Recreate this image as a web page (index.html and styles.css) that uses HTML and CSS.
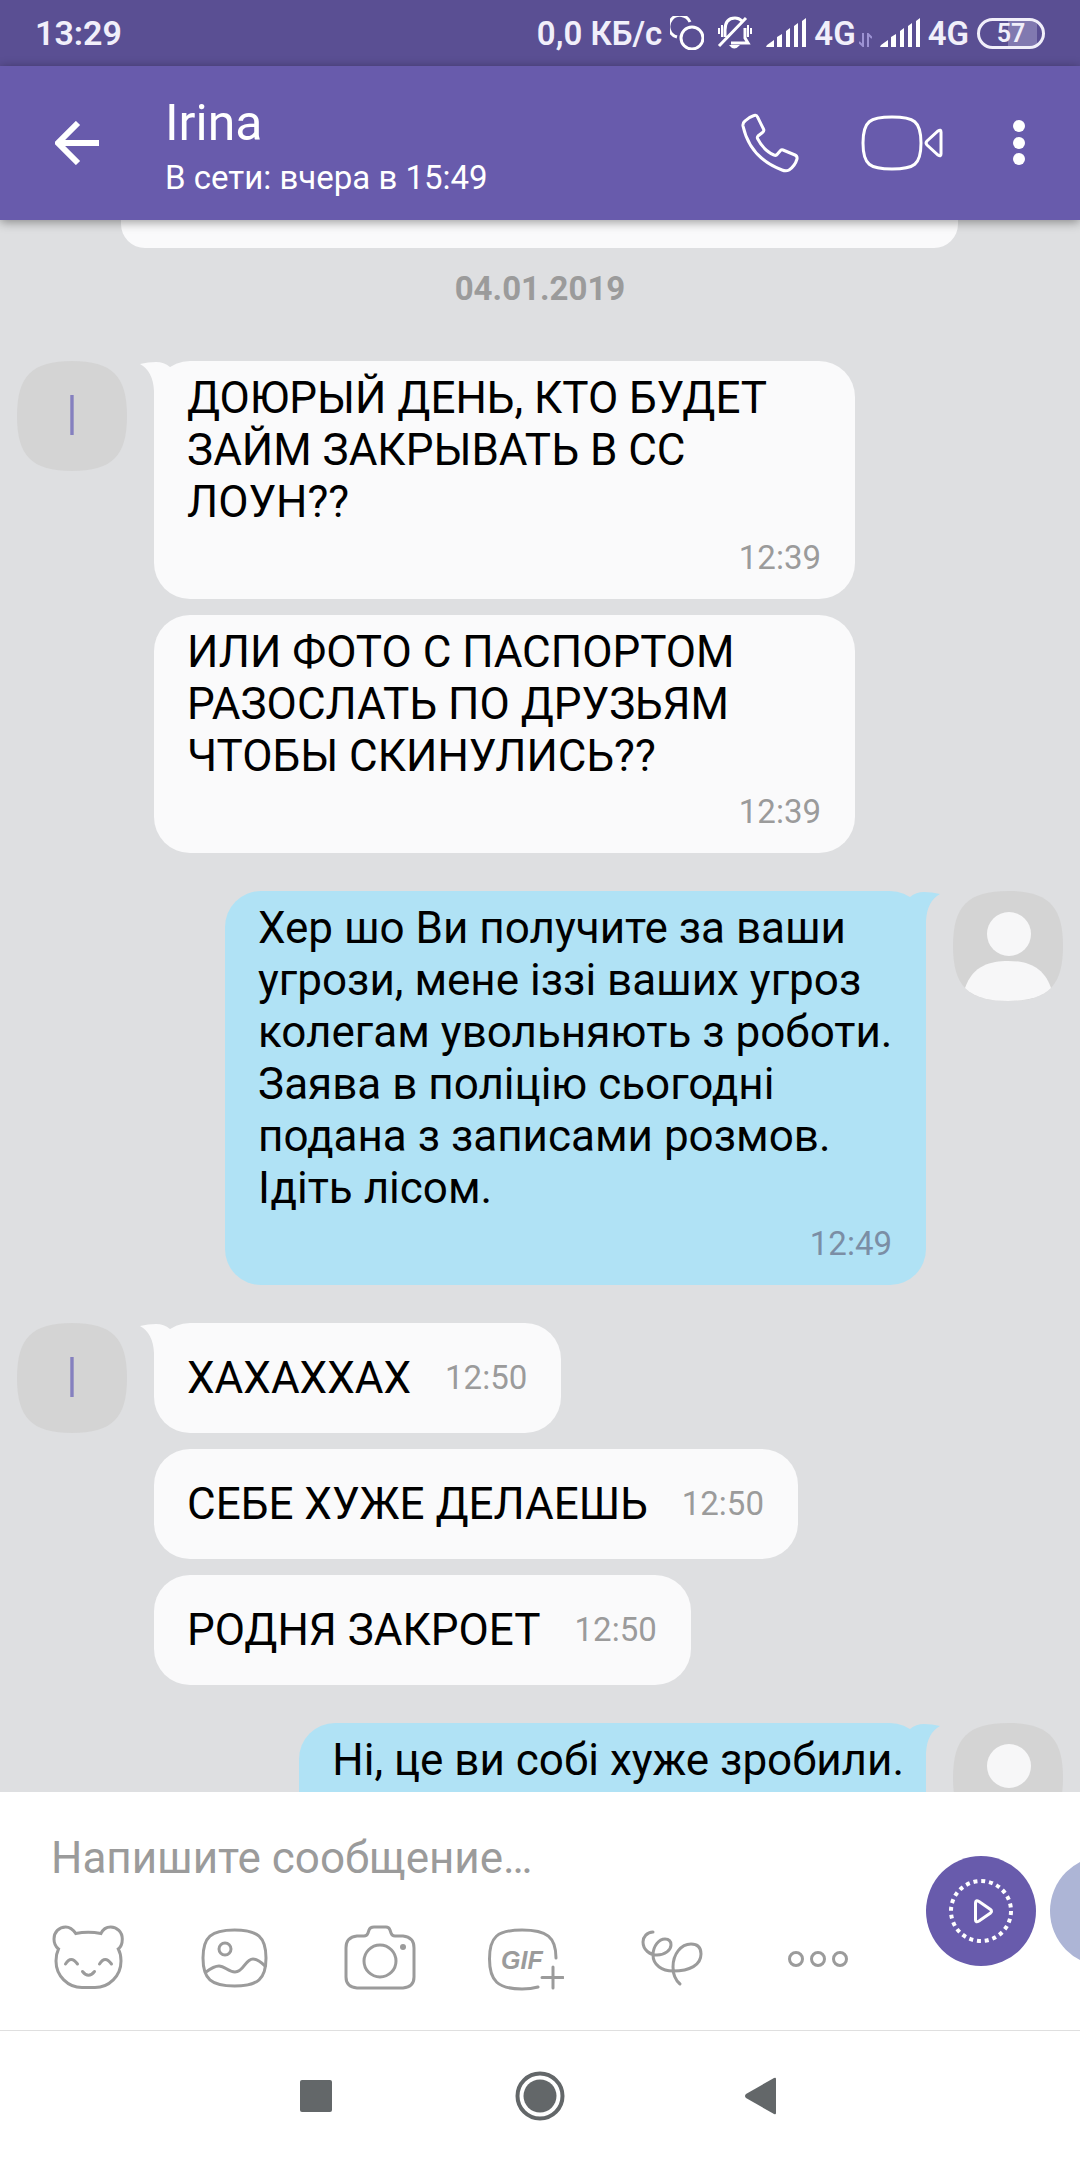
FILE: index.html
```
<!DOCTYPE html>
<html lang="ru">
    <head>
        <meta charset="utf-8">
        <title>Irina</title>
        <meta name="viewport" content="width=device-width, initial-scale=1">
        <link rel="stylesheet" href="styles.css">
    </head>

    <body>
        <svg class="sprite" aria-hidden="true">
            <symbol id="signal" viewBox="0 0 40 32">
                <path d="M0 30L1 28L8 23V30ZM11 30V20L16 17V30ZM20 30V14L24 11V30ZM28 30V9L32 6V30ZM36 30V4L40 1V30Z"/>
            </symbol>
            <symbol id="tail" viewBox="0 0 48 40">
                <path d="M0 3Q8 1 16 1Q24 1 30 6L40 40H14V30Q13 10 0 3Z"/>
            </symbol>
            <symbol id="squircle" viewBox="0 0 110 110">
                <path d="M55 0C95 0 110 15 110 55S95 110 55 110 0 95 0 55 15 0 55 0Z"/>
            </symbol>
            <symbol id="person" viewBox="0 0 110 110">
                <circle cx="56" cy="43" r="22"/>
                <path d="M12 97C20 74 38 70 55 70S90 74 98 97C88 107 72 110 55 110S22 107 12 97Z"/>
            </symbol>
        </svg>

        <div class="status-bar">
            <span class="clock">13:29</span>
            <div class="status-icons">
                <span>0,0 КБ/с</span>
                <svg class="line" width="34" height="34" viewBox="0 0 34 34">
                    <circle cx="22" cy="22" r="11"/>
                    <path d="M7 21A11 11 0 1 1 20 6"/>
                </svg>
                <svg class="line bell" width="36" height="34" viewBox="0 0 36 34">
                    <path d="M8 21V14Q8 2 18 2Q22 2 25 5M28 12V22L31 27H14M2 30L29 2"/>
                    <path class="thin" d="M2 12V18M5 9V21M31 9V21M34 12V18"/>
                    <path class="solid" d="M12 29H23Q17 36 12 29Z"/>
                </svg>
                <svg class="signal" width="40" height="32"><use href="#signal"/></svg>
                <span>4G</span>
                <svg class="arrows" width="13" height="14" viewBox="0 0 13 14">
                    <path d="M4 0V13L0 9M9 14V1L13 5"/>
                </svg>
                <svg class="signal" width="40" height="32"><use href="#signal"/></svg>
                <span>4G</span>
                <span class="battery">57</span>
            </div>
        </div>

        <header class="header">
            <button class="back" aria-label="Назад">
                <svg width="44" height="44" viewBox="0 0 44 44">
                    <path d="M23 2L3 22L23 42M3 22H44"/>
                </svg>
            </button>
            <div class="contact">
                <h1>Irina</h1>
                <p>В сети: вчера в 15:49</p>
            </div>
            <div class="header-actions">
                <button aria-label="Позвонить">
                    <svg class="line" width="60" height="62" viewBox="0 0 60 62">
                        <path d="M14 3.500Q16.500 2.500 17.500 5L23.500 17Q24.500 19 22.500 20.500L18 24Q17 25 17.500 26.500Q24 39 34 43Q36 44 37.500 42L40.500 38.500Q41.500 37.500 43 38L55 43Q57.500 44 57 47Q55 54 49 58Q46 59.500 42 58Q10 46 3 14Q2.500 11 5 9Q9 5 14 3.500Z"/>
                    </svg>
                </button>
                <button aria-label="Видеозвонок">
                    <svg class="line" width="82" height="58" viewBox="0 0 82 58">
                        <path d="M31 3C53 3 60 7 60 29S53 55 31 55 2 51 2 29 9 3 31 3Z"/>
                        <path d="M66 27L77 17Q80 15 80 18V40Q80 43 77 41L66 31Q64 29 66 27Z"/>
                    </svg>
                </button>
                <button aria-label="Меню">
                    <svg width="30" height="46" viewBox="0 0 30 46">
                        <circle cx="15" cy="6" r="6"/>
                        <circle cx="15" cy="23" r="6"/>
                        <circle cx="15" cy="39" r="6"/>
                    </svg>
                </button>
            </div>
        </header>

        <main class="chat">
            <div class="previous"></div>
            <div class="date">04.01.2019</div>

            <section class="group">
                <div class="avatar">
                    <svg class="avatar-shape"><use href="#squircle"/></svg>
                    <span>I</span>
                </div>
                <div class="messages">
                    <div class="bubble">
                        <svg class="tail"><use href="#tail"/></svg>
                        <p>ДОЮРЫЙ ДЕНЬ, КТО БУДЕТ ЗАЙМ ЗАКРЫВАТЬ В СС ЛОУН??</p>
                        <time>12:39</time>
                    </div>
                    <div class="bubble">
                        <p>ИЛИ ФОТО С ПАСПОРТОМ РАЗОСЛАТЬ ПО ДРУЗЬЯМ ЧТОБЫ СКИНУЛИСЬ??</p>
                        <time>12:39</time>
                    </div>
                </div>
            </section>

            <section class="group own">
                <div class="avatar">
                    <svg class="avatar-shape"><use href="#squircle"/></svg>
                    <svg class="person"><use href="#person"/></svg>
                </div>
                <div class="messages">
                    <div class="bubble">
                        <svg class="tail"><use href="#tail"/></svg>
                        <p>Хер шо Ви получите за ваши угрози, мене іззі ваших угроз колегам увольняють з роботи. Заява в поліцію сьогодні подана з записами розмов. Ідіть лісом.</p>
                        <time>12:49</time>
                    </div>
                </div>
            </section>

            <section class="group">
                <div class="avatar">
                    <svg class="avatar-shape"><use href="#squircle"/></svg>
                    <span>I</span>
                </div>
                <div class="messages">
                    <div class="bubble short">
                        <svg class="tail"><use href="#tail"/></svg>
                        <p>ХАХАХХАХ</p>
                        <time>12:50</time>
                    </div>
                    <div class="bubble short">
                        <p>СЕБЕ ХУЖЕ ДЕЛАЕШЬ</p>
                        <time>12:50</time>
                    </div>
                    <div class="bubble short">
                        <p>РОДНЯ ЗАКРОЕТ</p>
                        <time>12:50</time>
                    </div>
                </div>
            </section>

            <section class="group own">
                <div class="avatar">
                    <svg class="avatar-shape"><use href="#squircle"/></svg>
                    <svg class="person"><use href="#person"/></svg>
                </div>
                <div class="messages">
                    <div class="bubble tight">
                        <svg class="tail"><use href="#tail"/></svg>
                        <p>Ні, це ви собі хуже зробили.</p>
                    </div>
                </div>
            </section>
        </main>

        <footer class="composer">
            <div class="composer-main">
                <input type="text" aria-label="Сообщение" placeholder="Напишите сообщение…">
                <div class="toolbar">
                    <button aria-label="Стикеры">
                        <svg viewBox="0 0 76 76">
                            <path d="M25.700 13.500C22 8 18 7 15.700 7 9 7 4 12 4 19 4 23 6 27 8.500 29 7 32 6 36 6 41 6 56 18 67.500 32 67.500H45C59 67.500 71 56 71 41 71 36 70 32 68.300 29 71 27 72.300 23 72.300 19 72.300 12 67 7 60.700 7 57 7 53 9 51 13.500Q38 11 25.700 13.500Z"/>
                            <path d="M15.500 44Q21 35 27.500 44M49.500 44Q55 35 61.500 44M32.500 51.500Q38.500 59 44.500 51.500"/>
                        </svg>
                    </button>
                    <button aria-label="Галерея">
                        <svg viewBox="0 0 76 76">
                            <path d="M38.500 10C62 10 70 17 70 38S62 66 38.500 66 7 59 7 38 15 10 38.500 10Z"/>
                            <circle cx="29" cy="29" r="6"/>
                            <path d="M10 52Q18 46 23 46C29 46 32 52 39 52C48 52 49 39 57 39Q62 39 69 46"/>
                        </svg>
                    </button>
                    <button aria-label="Камера">
                        <svg viewBox="0 0 76 76">
                            <path d="M15 16H22Q25 16 26 13L27 10Q28 7 32 7H44Q47 7 48 10L49 13Q50 16 53 16H61Q72 17 72 28V57Q72 67 61 68H15Q4 67 4 57V28Q4 17 15 16Z"/>
                            <circle cx="38" cy="41" r="16"/>
                            <circle class="dot" cx="61" cy="27" r="3"/>
                        </svg>
                    </button>
                    <button aria-label="GIF">
                        <svg viewBox="0 0 76 76">
                            <path d="M68 38C68 17 59 10 34 10S1.500 17 1.500 39 10 69 34 69Q43 69 50 67M65 47V68M54 57.500H75"/>
                            <text x="13" y="49">GIF</text>
                        </svg>
                    </button>
                    <button aria-label="Рисунок">
                        <svg viewBox="0 0 76 76">
                            <path d="M19 12C13 12 9 17 9 22 9 30 16 35 23 35 31 35 37 30 37 25 37 21 35 19 31 19 25 19 19 26 19 35 19 45 28 51 39 51 56 51 67 45 67 34 67 27 63 24 57 24 47 24 39 34 39 47Q39 58 46 64"/>
                        </svg>
                    </button>
                    <button aria-label="Ещё">
                        <svg viewBox="0 0 76 76">
                            <circle cx="16" cy="39" r="6.500"/>
                            <circle cx="38" cy="39" r="6.500"/>
                            <circle cx="60" cy="39" r="6.500"/>
                        </svg>
                    </button>
                </div>
            </div>
            <button class="round" aria-label="Видеосообщение">
                <svg viewBox="0 0 110 110">
                    <circle class="ring" cx="55" cy="55" r="30"/>
                    <path d="M53 45.500L64.500 53.500Q66.500 55 64.500 57L53 65Q49.500 67 49.500 64V47Q49.500 43.500 53 45.500Z"/>
                </svg>
            </button>
            <button class="round next" aria-label="Голосовое сообщение"></button>
        </footer>

        <nav class="nav-bar">
            <button aria-label="Недавние">
                <svg viewBox="0 0 50 50"><rect x="9" y="9" width="32" height="32" rx="2"/></svg>
            </button>
            <button aria-label="Домой">
                <svg viewBox="0 0 50 50">
                    <circle cx="25" cy="25" r="16.500"/>
                    <circle class="ring" cx="25" cy="25" r="22.500"/>
                </svg>
            </button>
            <button aria-label="Назад">
                <svg viewBox="0 0 50 50"><path d="M7 23L35 7Q37 6 37 8V42Q37 44 35 43L7 27Q5 25 7 23Z"/></svg>
            </button>
        </nav>
    </body>
</html>
```
FILE: styles.css
```
* {
    box-sizing: border-box;
}
body {
    display: flex;
    flex-direction: column;
    height: 100vh;
    margin: 0;
    overflow: hidden;
    background: #fff;
    font-family: Roboto, "Noto Sans", sans-serif;
}
h1, p {
    margin: 0;
    font-weight: 400;
}
button {
    display: flex;
    align-items: center;
    justify-content: center;
    padding: 0;
    border: 0;
    background: none;
}
svg {
    display: block;
    flex: none;
}
.sprite {
    position: absolute;
    width: 0;
    height: 0;
}
.line {
    fill: none;
    stroke: #fff;
    stroke-width: 3;
}

/* status bar */
.status-bar {
    display: flex;
    flex: none;
    align-items: center;
    justify-content: space-between;
    height: 66px;
    padding: 0 35px;
    background: #5a4f93;
    color: #f1effa;
    font-size: 33px;
    font-weight: 600;
}
.clock {
    font-size: 34px;
}
.status-icons {
    display: flex;
    align-items: center;
    gap: 8px;
}
.bell {
    margin: 0 5px;
}
.bell .thin {
    stroke-width: 2;
}
.bell .solid {
    fill: #fff;
    stroke: none;
}
.signal {
    fill: #fff;
}
.arrows {
    margin: 14px 0 0 -5px;
    fill: none;
    stroke: #9d93d4;
    stroke-width: 2;
}
.battery {
    width: 68px;
    height: 31px;
    border: 3px solid #f1effa;
    border-radius: 16px;
    background: linear-gradient(to right, transparent 45%, #8179b0 45%, #8179b0 92%, transparent 92%) padding-box;
    font-size: 25px;
    line-height: 26px;
    text-align: center;
}

/* header */
.header {
    position: relative;
    z-index: 1;
    display: flex;
    flex: none;
    align-items: center;
    height: 154px;
    padding: 0 46px 0 55px;
    background: #685bac;
    box-shadow: 0 2px 10px rgba(0, 0, 0, 0.4);
    color: #fff;
}
.back svg {
    fill: none;
    stroke: #fff;
    stroke-width: 6;
}
.contact {
    flex: 1;
    padding: 4px 0 0 66px;
}
.contact h1 {
    margin-bottom: 5px;
    font-size: 50px;
    line-height: 60px;
}
.contact p {
    font-size: 33px;
    line-height: 40px;
}
.header-actions {
    display: flex;
    align-items: center;
    gap: 61px;
    fill: #fff;
}

/* chat */
.chat {
    flex: 1;
    min-height: 0;
    overflow: hidden;
    background: #dedfe1;
}
.previous {
    height: 28px;
    margin: 0 122px 0 121px;
    border-radius: 0 0 24px 24px;
    background: #fafafb;
}
.date {
    padding: 21px 0 52px;
    color: #9b9b9b;
    font-size: 33px;
    font-weight: 700;
    line-height: 40px;
    text-align: center;
}
.group {
    display: flex;
    gap: 27px;
    margin-bottom: 38px;
    padding: 0 17px;
}
.own {
    flex-direction: row-reverse;
}
.avatar {
    display: grid;
    flex: none;
    width: 110px;
    height: 110px;
    place-items: center;
    color: #8580bf;
    font-size: 56px;
    font-weight: 300;
}
.avatar > * {
    grid-area: 1 / 1;
}
.avatar-shape, .person {
    width: 110px;
    height: 110px;
    fill: #d4d4d4;
}
.person {
    fill: #f7f7f8;
}
.messages {
    display: flex;
    flex: 1;
    flex-direction: column;
    align-items: flex-start;
    gap: 16px;
}
.own .messages {
    align-items: flex-end;
}
.bubble {
    position: relative;
    max-width: 701px;
    padding: 11px 24px 21px 33px;
    border-radius: 36px;
    background: #fafafb;
    color: #000;
    fill: #fafafb;
    font-size: 44px;
    line-height: 52px;
}
.bubble time {
    display: block;
    padding: 10px 10px 0 0;
    color: #9b9b9b;
    font-size: 33px;
    line-height: 40px;
    text-align: right;
}
.own .bubble {
    background: #b0e2f5;
    fill: #b0e2f5;
}
.own time {
    color: #7b8ea5;
}
/* last message runs on below the visible part */
.own .tight {
    padding-right: 22px;
    padding-bottom: 71px;
}
.short {
    display: flex;
    align-items: center;
    gap: 34px;
    height: 110px;
    padding-top: 0;
    padding-bottom: 0;
}
.short time {
    padding-top: 0;
}
/* the corner that points at the avatar */
.tail {
    position: absolute;
    top: 0;
    left: -14px;
    width: 48px;
    height: 40px;
}
.own .tail {
    right: -14px;
    left: auto;
    transform: scaleX(-1);
}

/* composer */
.composer {
    display: flex;
    flex: none;
    align-items: center;
    gap: 14px;
    overflow: hidden;
    background: #fff;
    border-bottom: 1px solid #dfdfdf;
}
.composer-main {
    flex: 1;
    padding: 40px 21px 32px 15px;
}
.composer input {
    display: block;
    width: 100%;
    height: 52px;
    margin-bottom: 34px;
    padding: 0 0 0 36px;
    border: 0;
    outline: 0;
    background: none;
    font-family: inherit;
    font-size: 44px;
}
.composer input::placeholder {
    color: #9b9b9b;
    opacity: 1;
}
.toolbar {
    display: grid;
    grid-template-columns: repeat(6, 1fr);
}
.toolbar button {
    height: 80px;
}
.toolbar svg {
    width: 76px;
    height: 76px;
    fill: none;
    stroke: #9b9b9b;
    stroke-width: 3;
    stroke-linecap: round;
}
.toolbar .dot, .toolbar text {
    fill: #9b9b9b;
    stroke: none;
}
.toolbar text {
    font-size: 25px;
    font-style: italic;
    font-weight: 700;
}
.round {
    flex: none;
    width: 110px;
    height: 110px;
    border-radius: 50%;
    background: #685bac;
}
.round svg {
    width: 110px;
    height: 110px;
    fill: none;
    stroke: #fff;
    stroke-width: 3;
}
.round .ring {
    stroke-dasharray: 4 3.854;
    stroke-width: 4;
}
.next {
    margin-right: -80px;
    background: #adb5d6;
}

/* system navigation */
.nav-bar {
    display: flex;
    flex: none;
    align-items: center;
    justify-content: center;
    gap: 174px;
    height: 129px;
}
.nav-bar svg {
    width: 50px;
    height: 50px;
    fill: #636769;
}
.nav-bar .ring {
    fill: none;
    stroke: #636769;
    stroke-width: 4;
}
```
